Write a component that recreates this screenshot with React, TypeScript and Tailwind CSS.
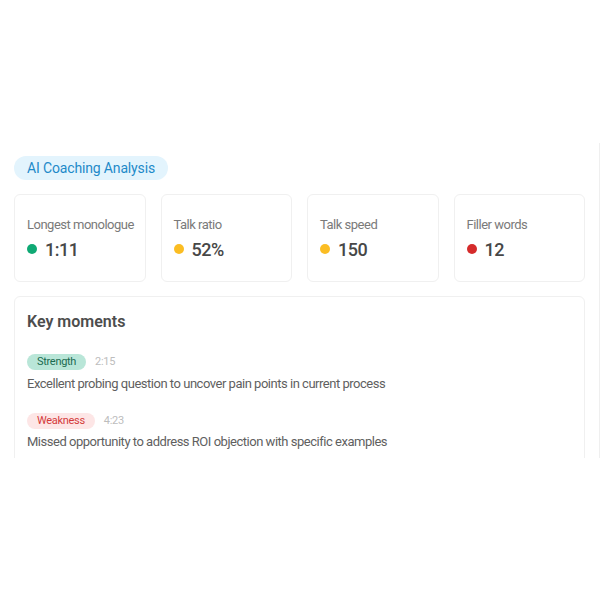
const metrics = [
  { label: "Longest monologue", value: "1:11", dot: "bg-[#0fa974]" },
  { label: "Talk ratio", value: "52%", dot: "bg-[#fbbd23]" },
  { label: "Talk speed", value: "150", dot: "bg-[#fbbd23]" },
  { label: "Filler words", value: "12", dot: "bg-[#d52b2b]" },
];

const moments = [
  {
    tag: "Strength",
    time: "2:15",
    text: "Excellent probing question to uncover pain points in current process",
    tagClass: "bg-[#b9e6d8] text-[#1b6b50]",
  },
  {
    tag: "Weakness",
    time: "4:23",
    text: "Missed opportunity to address ROI objection with specific examples",
    tagClass: "bg-[#fde6e6] text-[#d43b3b]",
  },
];

export default function App() {
  return (
    <div
      className="min-h-[600px] bg-white pt-[143px]"
      style={{ fontFamily: "Roboto, 'Liberation Sans', sans-serif" }}
    >
      <div className="h-[315px] overflow-hidden border-r border-[#efefef] px-[14px] pt-[13px]">
        <div className="flex flex-col gap-[14px]">
          {/* header pill */}
          <div className="flex">
            <span className="inline-flex h-[24px] items-center rounded-full bg-[#e3f4fd] px-[13px] text-[14px] tracking-[-0.15px] text-[#1e8ac9]">
              AI Coaching Analysis
            </span>
          </div>

          {/* metric cards */}
          <div className="grid grid-cols-4 gap-[15px]">
            {metrics.map((m) => (
              <div
                key={m.label}
                className="flex h-[88px] flex-col justify-center rounded-[6px] border border-[#f0f0f0] bg-white px-[12px]"
              >
                <div className="whitespace-nowrap text-[13px] leading-[17px] tracking-[-0.5px] text-[#7a7a7a]">
                  {m.label}
                </div>
                <div className="mt-[5px] flex items-center gap-[8px]">
                  <span className={`h-[10px] w-[10px] rounded-full ${m.dot}`} />
                  <span className="text-[18px] font-medium leading-[23px] tracking-[-0.5px] text-[#474747]">
                    {m.value}
                  </span>
                </div>
              </div>
            ))}
          </div>

          {/* key moments */}
          <div className="rounded-[6px] border border-[#f0f0f0] bg-white px-[12px] pt-[13px] pb-[16px]">
            <div className="text-[16px] font-semibold leading-[24px] text-[#4d4d4d]">
              Key moments
            </div>
            <div className="mt-[20px] flex flex-col gap-[20px]">
              {moments.map((k) => (
                <div key={k.tag}>
                  <div className="flex items-center gap-[9px]">
                    <span
                      className={`inline-flex h-[16px] items-center rounded-full px-[10px] text-[11px] tracking-[-0.3px] ${k.tagClass}`}
                    >
                      {k.tag}
                    </span>
                    <span className="text-[11px] tracking-[-0.3px] text-[#bdbdbd]">
                      {k.time}
                    </span>
                  </div>
                  <div className="mt-[4px] text-[13px] leading-[18px] tracking-[-0.48px] text-[#5f5f5f]">
                    {k.text}
                  </div>
                </div>
              ))}
            </div>
          </div>
        </div>
      </div>
    </div>
  );
}
